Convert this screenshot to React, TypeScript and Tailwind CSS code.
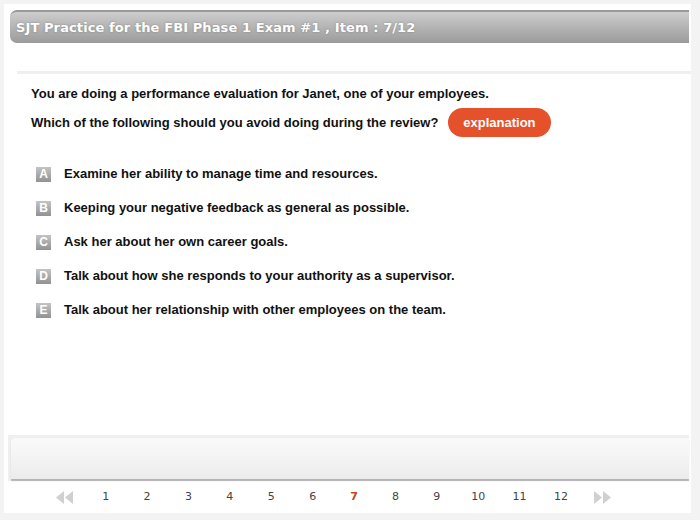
const options = [
  { key: "A", text: "Examine her ability to manage time and resources." },
  { key: "B", text: "Keeping your negative feedback as general as possible." },
  { key: "C", text: "Ask her about her own career goals." },
  { key: "D", text: "Talk about how she responds to your authority as a supervisor." },
  { key: "E", text: "Talk about her relationship with other employees on the team." },
];

const pages = [1, 2, 3, 4, 5, 6, 7, 8, 9, 10, 11, 12];
const current = 7;

function DoubleArrow({ dir }: { dir: "left" | "right" }) {
  return (
    <svg width="18" height="13" viewBox="0 0 18 13" className="block">
      {dir === "left" ? (
        <>
          <polygon points="8,0 8,13 0,6.5" fill="#d0d0d0" />
          <polygon points="17,0 17,13 9,6.5" fill="#d0d0d0" />
        </>
      ) : (
        <>
          <polygon points="1,0 1,13 9,6.5" fill="#d0d0d0" />
          <polygon points="10,0 10,13 18,6.5" fill="#d0d0d0" />
        </>
      )}
    </svg>
  );
}

export default function App() {
  return (
    <div className="w-[700px] h-[520px] bg-[#f3f3f3] p-[4px] overflow-hidden">
      <div className="w-[687px] h-[509px] bg-white flex flex-col">
        {/* title bar */}
        <div className="mt-[6px] ml-[6px] w-[679px] h-[33px] rounded-l-[7px] border-t-2 border-[#999] bg-gradient-to-b from-[#cdcdcd] to-[#9b9b9b] flex items-center pl-[6px]">
          <span className="text-white font-bold text-[13px] tracking-[0.1px] font-['DejaVu_Sans',Verdana,sans-serif] [text-shadow:0_0_2px_rgba(90,90,90,0.6)]">
            SJT Practice for the FBI Phase 1 Exam #1 , Item : 7/12
          </span>
        </div>

        <div className="mt-[28px] ml-[13px] h-[3px] bg-[#efefef]" />

        {/* question */}
        <div className="ml-[27px] font-['Liberation_Sans',Arial,sans-serif] font-bold text-[13px] text-[#111]">
          <div className="mt-[12px] leading-[16px]">
            You are doing a performance evaluation for Janet, one of your employees.
          </div>
          <div className="mt-[6px] flex items-center gap-[10px]">
            <span>Which of the following should you avoid doing during the review?</span>
            <span className="h-[29px] px-[15px] rounded-full bg-[#e4512a] text-white flex items-center">
              explanation
            </span>
          </div>

          <div className="mt-[20px] ml-[5px] flex flex-col">
            {options.map((o) => (
              <div key={o.key} className="h-[34px] flex items-center">
                <span className="w-[15px] h-[15px] bg-gradient-to-b from-[#c4c4c4] to-[#929292] text-white text-[12px] leading-none flex items-center justify-center">
                  {o.key}
                </span>
                <span className="ml-[13px]">{o.text}</span>
              </div>
            ))}
          </div>
        </div>

        <div className="flex-1" />

        {/* footer bar */}
        <div className="ml-[4px] mr-[2px] h-[46px] bg-[#efefef] pl-[3px] pt-[3px]">
          <div className="h-[41px] rounded-tl-[5px] bg-gradient-to-b from-[#fafafa] to-[#ececec] shadow-[0_2px_1px_rgba(0,0,0,0.25)]" />
        </div>

        {/* pagination */}
        <div className="h-[32px] flex items-center pl-[52px] pt-[1px] font-['DejaVu_Sans',Verdana,sans-serif] text-[11px] text-[#444]">
          <DoubleArrow dir="left" />
          <div className="ml-[11px] flex">
            {pages.map((p) => (
              <span
                key={p}
                className={`w-[41.4px] text-center ${p === current ? "text-[#c4481c] font-bold" : ""}`}
              >
                {p}
              </span>
            ))}
          </div>
          <div className="ml-[11px]">
            <DoubleArrow dir="right" />
          </div>
        </div>
      </div>
    </div>
  );
}
